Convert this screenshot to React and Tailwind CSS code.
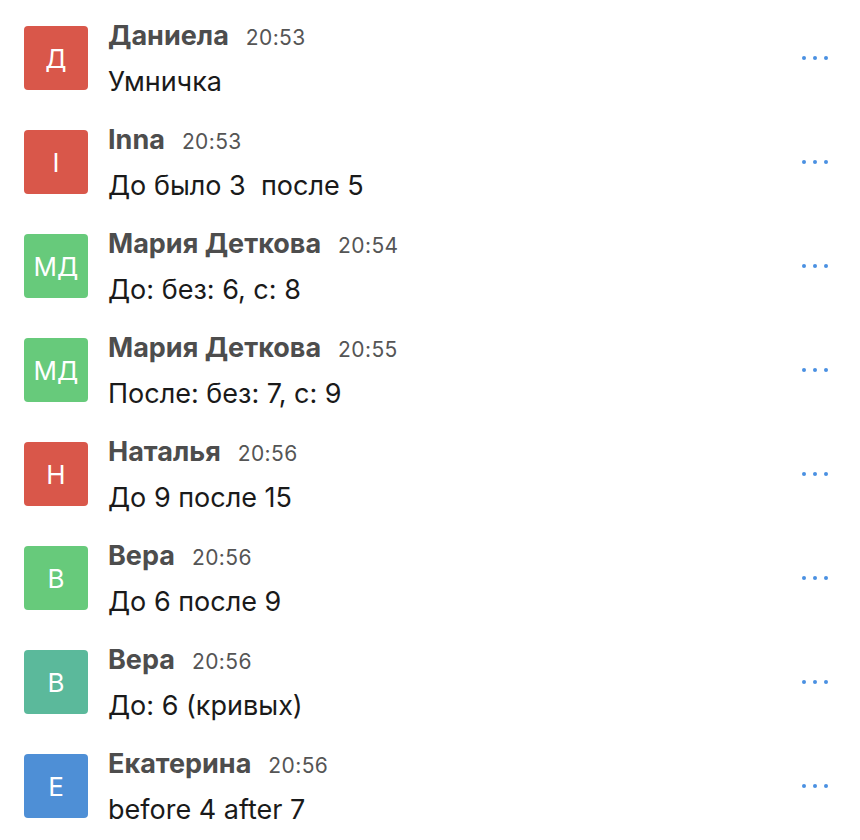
const messages = [
  { initials: 'Д', name: 'Даниела', time: '20:53', text: 'Умничка', color: 'bg-[#d9574a]' },
  { initials: 'I', name: 'Inna', time: '20:53', text: 'До было 3  после 5', color: 'bg-[#d9574a]' },
  { initials: 'МД', name: 'Мария Деткова', time: '20:54', text: 'До: без: 6, с: 8', color: 'bg-[#67ca7b]' },
  { initials: 'МД', name: 'Мария Деткова', time: '20:55', text: 'После: без: 7, с: 9', color: 'bg-[#67ca7b]' },
  { initials: 'Н', name: 'Наталья', time: '20:56', text: 'До 9 после 15', color: 'bg-[#d9574a]' },
  { initials: 'В', name: 'Вера', time: '20:56', text: 'До 6 после 9', color: 'bg-[#67ca7b]' },
  { initials: 'В', name: 'Вера', time: '20:56', text: 'До: 6 (кривых)', color: 'bg-[#5bb99b]' },
  { initials: 'Е', name: 'Екатерина', time: '20:56', text: 'before 4 after 7', color: 'bg-[#4e8fd6]' },
]

function Row({ m }) {
  return (
    <div className="flex items-start h-[104px]">
      <div
        className={`w-16 h-16 shrink-0 rounded-[4px] flex items-center justify-center text-white text-[26px] ${m.color}`}
      >
        {m.initials}
      </div>
      <div className="flex-1 ml-5 -mt-[6px]">
        <div className="flex items-baseline leading-[32px]">
          <span className="text-[27px] font-bold text-[#4d4d4d]">{m.name}</span>
          <span className="ml-[17px] text-[21px] tracking-[0.4px] text-[#555]">{m.time}</span>
        </div>
        <div className="mt-[12px] leading-[32px] text-[27px] text-[#1a1a1a] whitespace-pre">{m.text}</div>
      </div>
      <div className="flex gap-[7px] mt-[30px] mr-[32px]">
        <span className="w-[4px] h-[4px] rounded-full bg-[#4a90e2]" />
        <span className="w-[4px] h-[4px] rounded-full bg-[#4a90e2]" />
        <span className="w-[4px] h-[4px] rounded-full bg-[#4a90e2]" />
      </div>
    </div>
  )
}

export default function App() {
  return (
    <div
      className="w-[860px] h-[840px] bg-white pt-[26px] pl-6 overflow-hidden"
      style={{ fontFamily: 'Inter, "Liberation Sans", Arial, sans-serif' }}
    >
      {messages.map((m, i) => (
        <Row key={i} m={m} />
      ))}
    </div>
  )
}
